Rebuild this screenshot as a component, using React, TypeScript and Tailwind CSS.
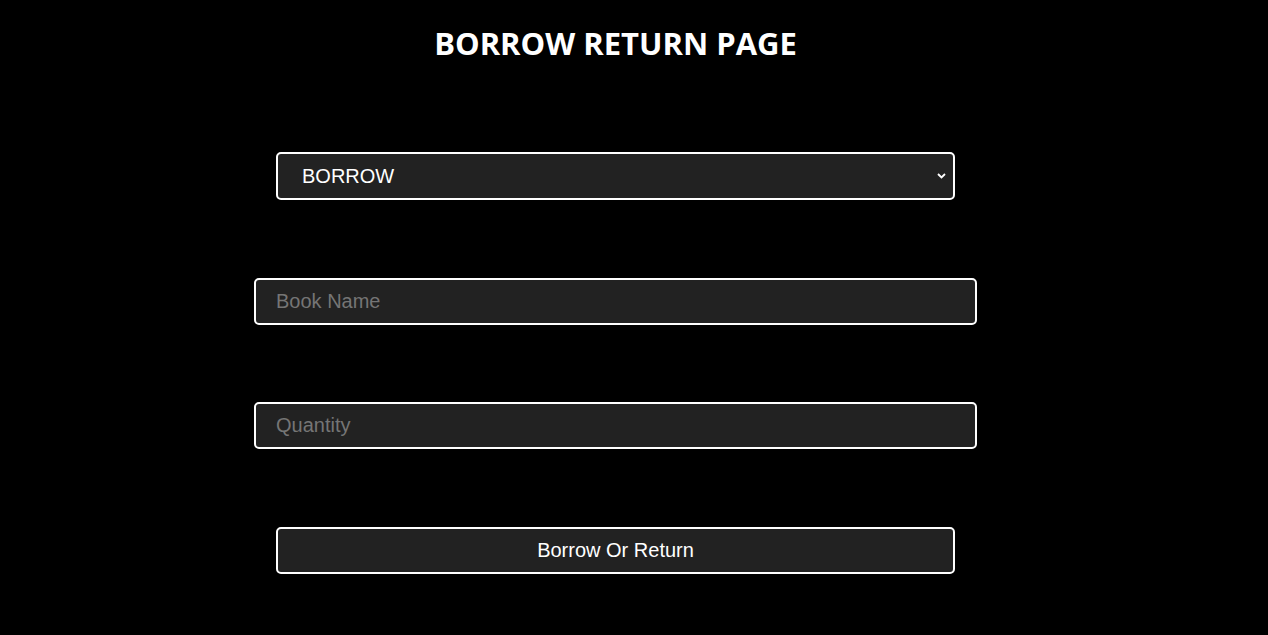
import React from "react";

export default function App() {
  return (
    <div className="min-h-[635px] w-full bg-black">
      <div className="flex w-[1231px] flex-col items-center">
        <h1
          className="mt-[21px] h-[44px] text-[31px] font-bold leading-[44px] text-white"
          style={{ fontFamily: '"Segoe UI", "Open Sans", sans-serif' }}
        >
          BORROW RETURN PAGE
        </h1>
        <div
          className="mt-[87px] flex flex-col items-center"
          style={{ fontFamily: '"Liberation Sans", Arial, sans-serif' }}
        >
          <div className="relative h-[48px] w-[679px]">
            <select
              defaultValue="BORROW"
              className="h-full w-full appearance-none rounded-[5px] border-2 border-white bg-[#222222] pl-[24px] text-[20px] text-white outline-none"
            >
              <option value="BORROW">BORROW</option>
              <option value="RETURN">RETURN</option>
            </select>
            <svg
              className="pointer-events-none absolute right-[9px] top-[21px]"
              width="9"
              height="6"
              viewBox="0 0 9 6"
            >
              <path d="M1 1 L4.5 4.5 L8 1" stroke="white" strokeWidth="1.8" fill="none" />
            </svg>
          </div>
          <input
            placeholder="Book Name"
            className="mt-[78px] h-[47px] w-[723px] rounded-[5px] border-2 border-white bg-[#222222] px-[20px] pb-[1px] text-[20px] text-white outline-none placeholder:text-[#757575]"
          />
          <input
            placeholder="Quantity"
            className="mt-[77px] h-[47px] w-[723px] rounded-[5px] border-2 border-white bg-[#222222] px-[20px] pb-[1px] text-[20px] text-white outline-none placeholder:text-[#757575]"
          />
          <button className="mt-[78px] h-[47px] w-[679px] rounded-[5px] border-2 border-white bg-[#222222] pb-[2px] text-[20px] text-white">
            Borrow Or Return
          </button>
        </div>
      </div>
    </div>
  );
}
